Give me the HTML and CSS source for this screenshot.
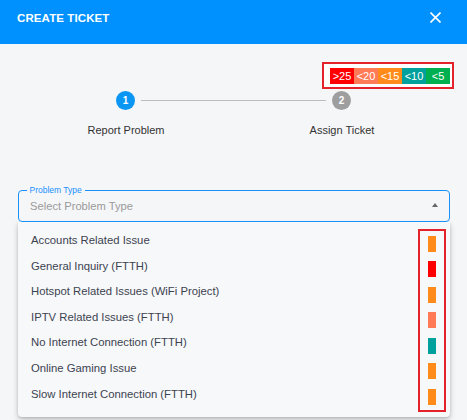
FILE: index.html
```html
<!DOCTYPE html>
<html lang="en">
<head>
<meta charset="utf-8">
<title>Create Ticket</title>
<link rel="stylesheet" href="styles.css">
</head>
<body>
<div class="dialog">
  <header class="header">
    <h1 class="title">CREATE TICKET</h1>
    <button class="close" aria-label="Close">
      <svg width="11" height="11" viewBox="0 0 11 11"><path d="M0.5 0.5 L10.5 10.5 M10.5 0.5 L0.5 10.5" stroke="#fff" stroke-width="1.6" fill="none"/></svg>
    </button>
  </header>
  <main class="content">
    <div class="legend-row">
      <div class="legend">
        <span class="cell c-red">&gt;25</span>
        <span class="cell c-coral">&lt;20</span>
        <span class="cell c-orange">&lt;15</span>
        <span class="cell c-teal">&lt;10</span>
        <span class="cell c-green">&lt;5</span>
      </div>
    </div>
    <div class="stepper">
      <div class="steps">
        <span class="dot active">1</span>
        <span class="connector"></span>
        <span class="dot">2</span>
      </div>
      <div class="labels">
        <span class="step-label">Report Problem</span>
        <span class="step-label">Assign Ticket</span>
      </div>
    </div>
    <div class="field">
      <span class="field-label">Problem Type</span>
      <span class="placeholder">Select Problem Type</span>
      <span class="arrow"></span>
    </div>
    <div class="menu">
      <ul class="options">
        <li>Accounts Related Issue</li>
        <li>General Inquiry (FTTH)</li>
        <li>Hotspot Related Issues (WiFi Project)</li>
        <li>IPTV Related Issues (FTTH)</li>
        <li>No Internet Connection (FTTH)</li>
        <li>Online Gaming Issue</li>
        <li>Slow Internet Connection (FTTH)</li>
      </ul>
      <div class="bars">
        <span class="bar-cell"><span class="bar c-orange"></span></span>
        <span class="bar-cell"><span class="bar c-red"></span></span>
        <span class="bar-cell"><span class="bar c-orange"></span></span>
        <span class="bar-cell"><span class="bar c-coral"></span></span>
        <span class="bar-cell"><span class="bar c-teal"></span></span>
        <span class="bar-cell"><span class="bar c-orange"></span></span>
        <span class="bar-cell"><span class="bar c-orange"></span></span>
      </div>
    </div>
  </main>
</div>
</body>
</html>
```

FILE: styles.css
```css
* { box-sizing: border-box; }
html, body {
  margin: 0;
  padding: 0;
  background: #f5f6f8;
  font-family: "Liberation Sans", Arial, sans-serif;
}
.dialog {
  width: 467px;
  height: 420px;
  overflow: hidden;
  background: #f5f6f8;
}
.header {
  height: 44px;
  background: #0091ff;
  display: flex;
  justify-content: space-between;
  align-items: flex-start;
  padding: 11px 26px 0 17px;
}
.title {
  margin: 0;
  font-size: 11.5px;
  line-height: 14px;
  font-weight: 700;
  color: #fff;
  letter-spacing: 0.1px;
}
.close {
  margin-top: 1px;
  padding: 0;
  border: 0;
  background: transparent;
  width: 11px;
  height: 11px;
  display: block;
}
.close svg { display: block; }

.content { padding: 0; }

.legend-row {
  display: flex;
  justify-content: flex-end;
  padding-right: 13px;
  margin-top: 18px;
}
.legend {
  display: flex;
  background: #fff;
  border: 2px solid #e4222b;
  padding: 4px 2px 3px 6px;
}
.cell {
  width: 24px;
  height: 16px;
  line-height: 16px;
  text-align: center;
  color: #fff;
  font-size: 11px;
}
.c-red { background: #ff0000; }
.c-coral { background: #ff7b57; }
.c-orange { background: #ff8c1a; }
.c-teal { background: #00a09c; }
.c-green { background: #00b050; }

.stepper { margin-top: 2px; }
.steps {
  display: flex;
  align-items: center;
  padding-left: 116px;
}
.dot {
  width: 19px;
  height: 19px;
  border-radius: 50%;
  background: #9e9e9e;
  color: #fff;
  font-size: 10px;
  font-weight: 700;
  line-height: 19px;
  text-align: center;
}
.dot.active { background: #0a96f2; }
.connector {
  width: 185px;
  height: 1px;
  margin: 0 6px;
  background: #bdbdbd;
}
.labels {
  display: grid;
  grid-template-columns: 216px 216px;
  margin: 14px 0 0 18px;
}
.step-label {
  text-align: center;
  font-size: 11px;
  line-height: 13px;
  color: #333;
}

.field {
  position: relative;
  margin: 53px 17px 0 18px;
  height: 32px;
  border: 1px solid #1a90ff;
  border-radius: 4px;
  display: flex;
  align-items: center;
  justify-content: space-between;
  padding: 0 11px 0 11px;
}
.field-label {
  position: absolute;
  top: -6px;
  left: 7.5px;
  padding: 0 3px;
  background: #f5f6f8;
  font-size: 8.5px;
  line-height: 11px;
  color: #1a90ff;
}
.placeholder {
  font-size: 11.2px;
  line-height: 30px;
  color: #9a9a9a;
}
.arrow {
  width: 0;
  height: 0;
  border-left: 3.5px solid transparent;
  border-right: 3.5px solid transparent;
  border-bottom: 4px solid #666;
  margin-top: -2px;
}

.menu {
  margin: 0 17px 0 18px;
  background: #f7f8fa;
  border-radius: 0 0 4px 4px;
  box-shadow: 0 3px 6px rgba(0,0,0,0.18), 0 1px 3px rgba(0,0,0,0.14);
  display: flex;
  padding: 6px 4px 5px 0;
}
.options {
  list-style: none;
  margin: 0;
  padding: 0;
  flex: 1;
}
.options li {
  height: 25.6px;
  line-height: 25.6px;
  padding-left: 13px;
  font-size: 11.3px;
  color: #3c4350;
}
.bars {
  width: 28px;
  margin-top: 1px;
  border: 2px solid #e4222b;
  display: flex;
  flex-direction: column;
  align-self: flex-start;
}
.bar-cell {
  height: 25.5px;
  display: flex;
  align-items: center;
  justify-content: center;
}
.bar {
  width: 8px;
  height: 16px;
}
```
